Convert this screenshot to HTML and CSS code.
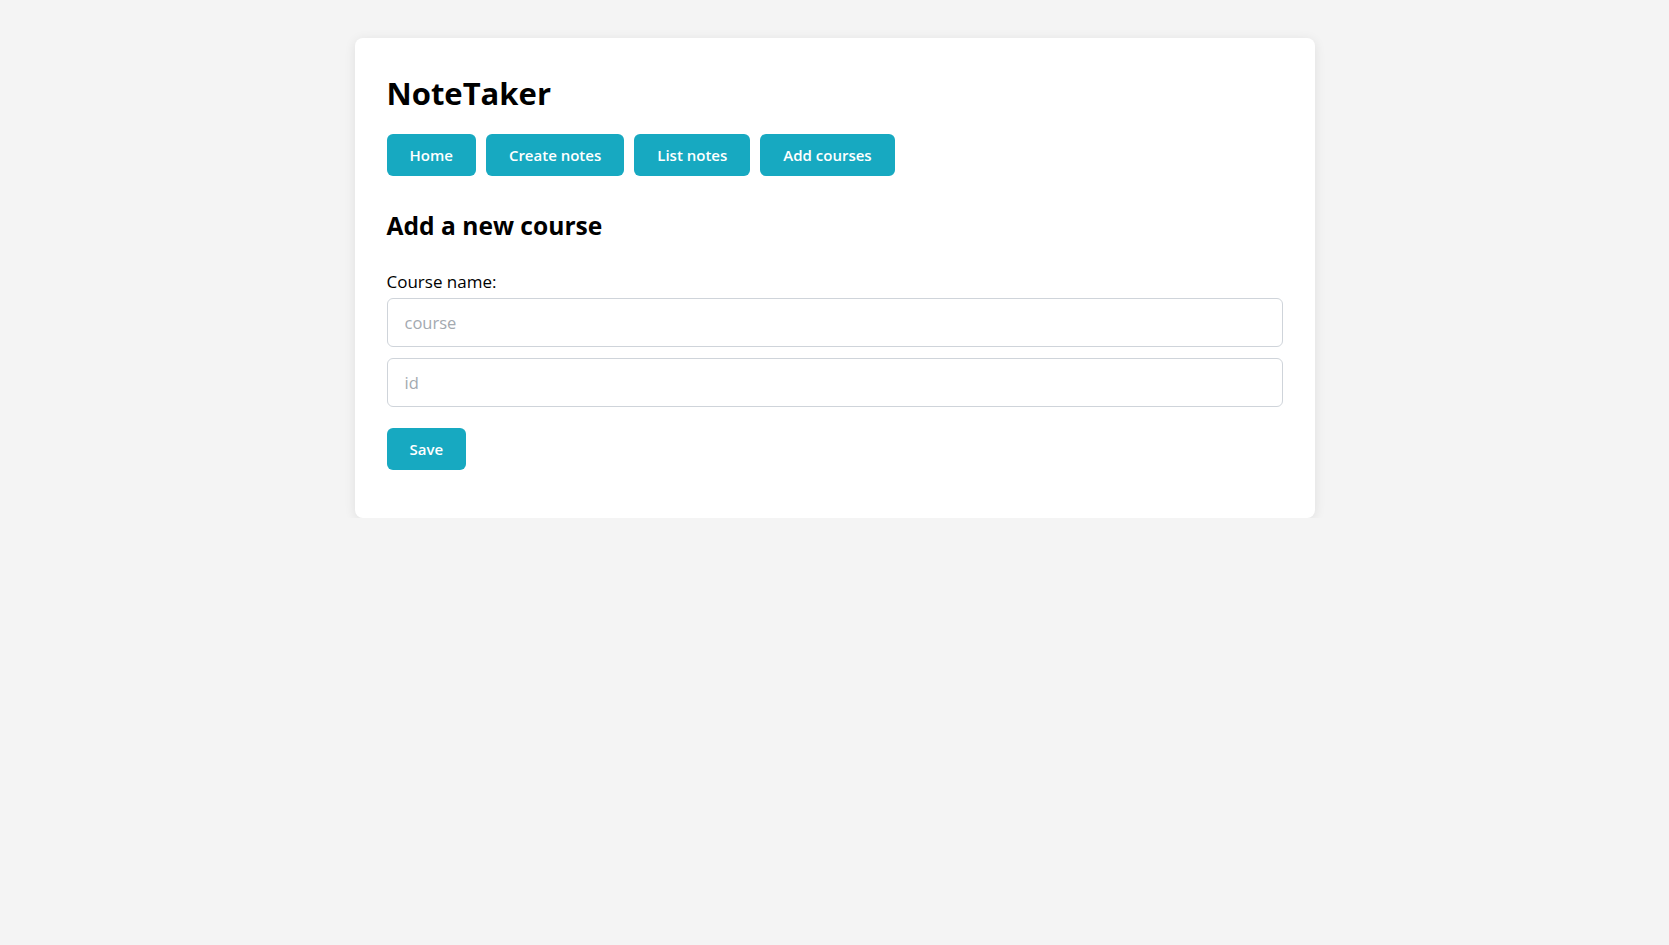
FILE: index.html
```html
<!DOCTYPE html>
<html lang="en">
<head>
<meta charset="utf-8">
<title>NoteTaker</title>
<link rel="stylesheet" href="styles.css">
</head>
<body>
<main class="card">
  <h1 class="title">NoteTaker</h1>
  <nav class="nav">
    <button class="btn">Home</button>
    <button class="btn">Create notes</button>
    <button class="btn">List notes</button>
    <button class="btn">Add courses</button>
  </nav>
  <h2 class="subtitle">Add a new course</h2>
  <form class="form">
    <label class="label" for="course">Course name:</label>
    <input class="input" id="course" type="text" placeholder="course">
    <input class="input" type="text" placeholder="id">
    <div class="actions"><button class="btn" type="button">Save</button></div>
  </form>
</main>
</body>
</html>
```
FILE: styles.css
```css
* { box-sizing: border-box; }
html, body { margin: 0; padding: 0; }
body {
  background: #f4f4f4;
  font-family: "Segoe UI", "Open Sans", "Noto Sans", sans-serif;
  color: #000;
}
.card {
  width: 960px;
  margin: 38px auto 0;
  background: #fff;
  border-radius: 8px;
  box-shadow: 0 2px 12px rgba(0,0,0,0.09);
  padding: 32px 32px 48px 32px;
}
.title {
  margin: 0;
  font-size: 31px;
  line-height: 46px;
  font-weight: 700;
}
.nav {
  display: flex;
  gap: 10px;
  margin-top: 18px;
}
.btn {
  font-family: inherit;
  font-size: 15px;
  font-weight: 600;
  color: #fff;
  background: #17a9c1;
  border: none;
  border-radius: 6px;
  height: 42px;
  padding: 0 23px;
  cursor: pointer;
}
.subtitle {
  margin: 34px 0 0;
  font-size: 24.6px;
  line-height: 32px;
  font-weight: 700;
}
.form {
  display: flex;
  flex-direction: column;
  gap: 11px;
  margin-top: 29px;
}
.label {
  font-size: 17px;
  font-weight: 500;
  line-height: 22px;
  margin-bottom: -6px;
}
.input {
  width: 100%;
  height: 49px;
  border: 1px solid #cfd4da;
  border-radius: 6px;
  padding: 0 17px;
  font-family: inherit;
  font-size: 16.5px;
  color: #333;
  outline: none;
}
.input::placeholder { color: #a3a9b0; }
.actions { margin-top: 10px; }
```
